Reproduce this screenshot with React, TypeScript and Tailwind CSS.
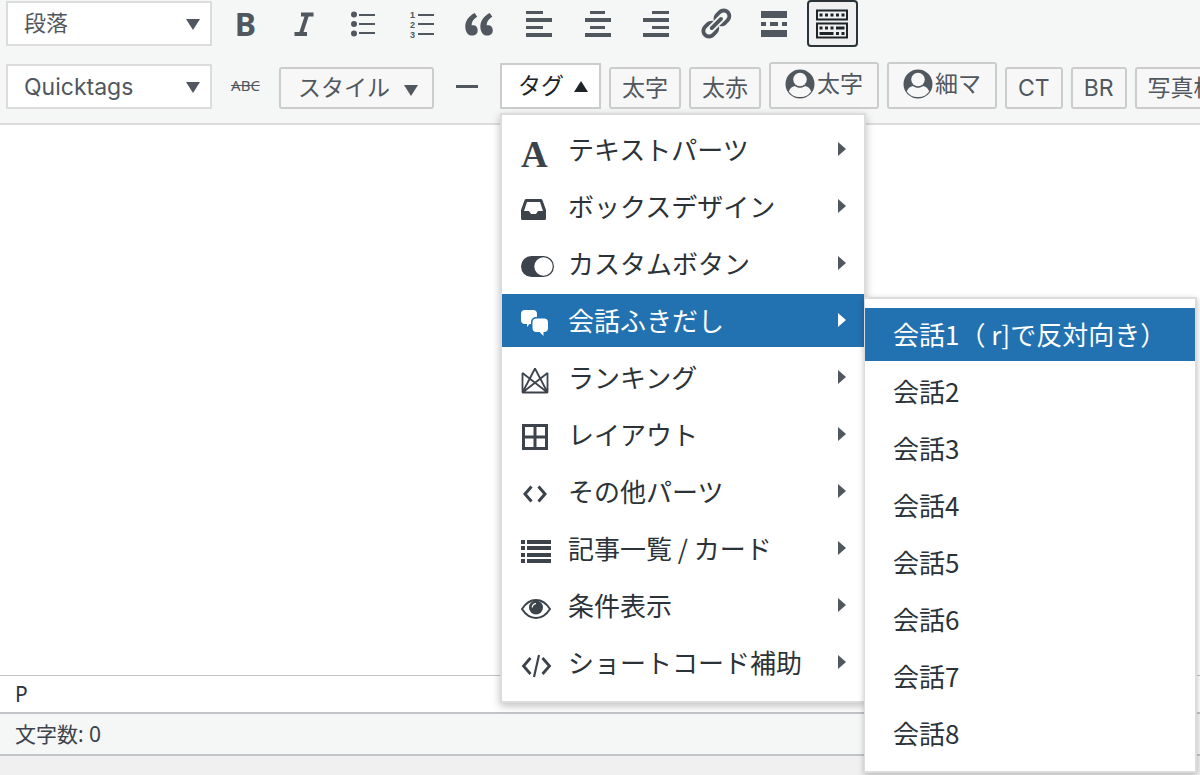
import { ReactNode } from "react";

const TALK_ITEMS = [
  "会話1（ r]で反対向き）",
  "会話2",
  "会話3",
  "会話4",
  "会話5",
  "会話6",
  "会話7",
  "会話8",
];

function Svg({ w, h, children }: { w: number; h: number; children: ReactNode }) {
  return (
    <svg width={w} height={h} viewBox={`0 0 ${w} ${h}`} fill="currentColor" aria-hidden="true" className="shrink-0 overflow-visible">
      {children}
    </svg>
  );
}

function CaretDown() {
  return (
    <Svg w={14} h={11}>
      <path d="M0 0h14L7 11z" />
    </Svg>
  );
}

function UserIcon() {
  return (
    <Svg w={30} h={30}>
      <circle cx="15" cy="15" r="14.5" />
      <circle cx="15" cy="10.5" r="6.8" fill="#f7f7f7" />
      <path d="M3.800 22.500c1-3.200 3.200-5 6-5.600 3.200 2.400 7.200 2.400 10.400 0 2.800.6 5 2.400 6 5.600A13 13 0 0 1 15 28 13 13 0 0 1 3.800 22.500z" fill="#f7f7f7" />
    </Svg>
  );
}

const TOOLS: { label: string; icon: ReactNode; active?: boolean }[] = [
  { label: "太字", icon: <span className="font-['Noto_Sans','Noto_Sans_CJK_JP',sans-serif] text-[32px] leading-8 font-bold">B</span> },
  {
    label: "イタリック",
    icon: (
      <Svg w={20} h={24}>
        <path d="M7 2.500h12.500M.5 22h12.500M13.200 2.500L6.800 22" fill="none" stroke="currentColor" strokeWidth="4" />
      </Svg>
    ),
  },
  {
    label: "番号なしリスト",
    icon: (
      <Svg w={24} h={26}>
        <circle cx="3" cy="3.5" r="3" />
        <circle cx="3" cy="13" r="3" />
        <circle cx="3" cy="22.5" r="3" />
        <path d="M8 3h16v2H8zM8 12h16v2H8zM8 21h16v2H8z" />
      </Svg>
    ),
  },
  {
    label: "番号付きリスト",
    icon: (
      <Svg w={26} h={32}>
        <g fontFamily="Liberation Sans, sans-serif" fontSize="9" fontWeight="700">
          <text x="1" y="10">1</text>
          <text x="1" y="20">2</text>
          <text x="1" y="30">3</text>
        </g>
        <path d="M9 6h16v2H9zM9 15h16v2H9zM9 25h16v2H9z" />
      </Svg>
    ),
  },
  {
    label: "引用",
    icon: (
      <svg width="32" height="32" viewBox="0 0 20 20" fill="currentColor" aria-hidden="true" className="mt-1">
        <path d="M8.54 12.74c0-.87-.24-1.61-.72-2.22-.73-.92-2.14-1.03-2.96-.85-.34-1.93 1.3-4.39 3.42-5.45L6.65 1.94C3.45 3.46.31 6.96.85 11.37 1.19 14.16 2.8 16 5.08 16c1 0 1.83-.29 2.48-.88.66-.59.98-1.38.98-2.38zm9.43 0c0-.87-.24-1.61-.72-2.22-.73-.92-2.14-1.03-2.96-.85-.34-1.93 1.3-4.39 3.42-5.45l-1.63-2.28c-3.2 1.52-6.34 5.02-5.8 9.43.34 2.79 1.95 4.63 4.23 4.63 1 0 1.83-.29 2.48-.88.66-.59.98-1.38.98-2.38z" />
      </svg>
    ),
  },
  {
    label: "左寄せ",
    icon: (
      <Svg w={26} h={26}>
        <path d="M0 0h17v3H0zM0 7h26v4H0zM0 15h17v3H0zM0 22h26v4H0z" />
      </Svg>
    ),
  },
  {
    label: "中央揃え",
    icon: (
      <Svg w={26} h={26}>
        <path d="M5 0h15v3H5zM0 7h26v4H0zM5 15h15v3H5zM0 22h26v4H0z" />
      </Svg>
    ),
  },
  {
    label: "右寄せ",
    icon: (
      <Svg w={26} h={26}>
        <path d="M9 0h17v3H9zM0 7h26v4H0zM9 15h17v3H9zM0 22h26v4H0z" />
      </Svg>
    ),
  },
  {
    label: "リンクの挿入",
    icon: (
      <svg width="35" height="35" viewBox="0 0 20 20" fill="currentColor" aria-hidden="true">
        <path d="M17.74 2.76c1.68 1.69 1.68 4.41 0 6.1l-1.53 1.52c-1.12 1.12-2.7 1.47-4.14 1.09l2.62-2.61.76-.77.76-.76c.84-.84.84-2.2 0-3.04-.84-.85-2.2-.85-3.04 0l-.77.76-3.38 3.38c-.37-1.44-.02-3.02 1.1-4.14l1.52-1.53c1.69-1.68 4.42-1.68 6.1 0zM8.59 13.43l5.34-5.34c.42-.42.42-1.1 0-1.52-.44-.43-1.13-.39-1.53 0l-5.33 5.34c-.42.42-.42 1.1 0 1.52.44.43 1.13.39 1.52 0zm-.76 2.29l4.14-4.15c.38 1.44.03 3.02-1.09 4.14l-1.52 1.53c-1.69 1.68-4.41 1.68-6.1 0-1.68-1.68-1.68-4.42 0-6.1l1.53-1.52c1.12-1.12 2.7-1.47 4.14-1.1l-4.14 4.15c-.85.84-.85 2.2 0 3.05.84.84 2.2.84 3.04 0z" />
      </svg>
    ),
  },
  {
    label: "「続きを読む」タグを挿入",
    icon: (
      <Svg w={26} h={26}>
        <path d="M0 0h26v7H0zM0 11h5v4H0zM9 11h8v4H9zM21 11h5v4h-5zM0 19h26v7H0z" />
      </Svg>
    ),
  },
  {
    label: "ツールバー切り替え",
    active: true,
    icon: (
      <Svg w={34} h={30}>
        <path d="M2 1.5h30v9H2zM2 14.5h30v14H2z" fill="none" stroke="currentColor" strokeWidth="2" />
        <path d="M4.500 4.500h3v3h-3zM10 4.500h3v3h-3zM15.500 4.500h3v3h-3zM21 4.500h3v3h-3zM26.500 4.500h3v3h-3zM4.500 17.500h3v3h-3zM10 17.500h3v3h-3zM15.500 17.500h3v3h-3zM21 17.500h8.500v3H21zM4.500 23h14v3h-14zM21 23h3v3h-3zM26.500 23h3v3h-3z" />
      </Svg>
    ),
  },
];

const MENU: { label: string; icon: ReactNode; open?: boolean }[] = [
  {
    label: "テキストパーツ",
    icon: <span className="pt-1 font-['Liberation_Serif',serif] text-[37px] leading-7 font-bold">A</span>,
  },
  {
    label: "ボックスデザイン",
    icon: (
      <Svg w={25} h={21}>
        <path fillRule="evenodd" d="M5.500 0h14a2 2 0 0 1 2 1.300L25 11v8.500a1.500 1.500 0 0 1-1.500 1.500h-22A1.500 1.500 0 0 1 0 19.500V11l3.500-9.700A2 2 0 0 1 5.500 0zM6 3L3 12h5l2 3h5l2-3h5L19 3z" />
      </Svg>
    ),
  },
  {
    label: "カスタムボタン",
    icon: (
      <Svg w={33} h={21}>
        <rect width="33" height="21" rx="10.5" />
        <circle cx="22.500" cy="10.500" r="9.200" fill="#fff" />
      </Svg>
    ),
  },
  {
    label: "会話ふきだし",
    open: true,
    icon: (
      <Svg w={28} h={27}>
        <path d="M4 0h8a4 4 0 0 1 4 4v3h-1a5 5 0 0 0-5 5v2H8.500L6 17v-3H4a4 4 0 0 1-4-4V4a4 4 0 0 1 4-4z" />
        <path d="M15.500 8.500H23a4 4 0 0 1 4 4V18a4 4 0 0 1-4 4h-.5v4l-4-4h-3a4 4 0 0 1-4-4v-5.500a4 4 0 0 1 4-4z" />
      </Svg>
    ),
  },
  {
    label: "ランキング",
    icon: (
      <Svg w={28} h={28}>
        <path d="M1.500 25.500V6l25 19.500L14 1.500l-12.500 24L26.500 6v19.500z" fill="none" stroke="currentColor" strokeWidth="1.800" strokeLinejoin="bevel" />
      </Svg>
    ),
  },
  {
    label: "レイアウト",
    icon: (
      <Svg w={28} h={28}>
        <path d="M2.500 1.500h23v23h-23zM14 1v24M2 13h24" fill="none" stroke="currentColor" strokeWidth="3" />
      </Svg>
    ),
  },
  {
    label: "その他パーツ",
    icon: (
      <Svg w={28} h={20}>
        <path d="M10.500 1.500L4 9l6.500 7.500M17.500 1.500L24 9l-6.500 7.500" fill="none" stroke="currentColor" strokeWidth="3" />
      </Svg>
    ),
  },
  {
    label: "記事一覧 / カード",
    icon: (
      <Svg w={30} h={24}>
        <path d="M0 0h4v4H0zM6 0h24v4H6zM0 6h4v4H0zM6 6h24v4H6zM0 13h4v4H0zM6 13h24v4H6zM0 19h4v4H0zM6 19h24v4H6z" />
      </Svg>
    ),
  },
  {
    label: "条件表示",
    icon: (
      <Svg w={30} h={20}>
        <path d="M1 10c3.500-5.500 8.200-9 14-9s10.500 3.500 14 9c-3.500 5.500-8.200 9-14 9S4.500 15.500 1 10z" fill="none" stroke="currentColor" strokeWidth="2" />
        <circle cx="15" cy="8.500" r="7" />
        <path d="M11.300 8.500A3.700 3.700 0 0 1 15 4.600" fill="none" stroke="#fff" strokeWidth="1.200" />
      </Svg>
    ),
  },
  {
    label: "ショートコード補助",
    icon: (
      <Svg w={31} h={22}>
        <path d="M9.500 3L2.500 11l7 8M21.500 3l7 8-7 8" fill="none" stroke="currentColor" strokeWidth="2.800" />
        <path d="M18 0L13 22" stroke="currentColor" strokeWidth="2.200" />
      </Svg>
    ),
  },
];

function FormatSelect({ label, value, textClass }: { label: string; value: string; textClass: string }) {
  return (
    <div className="relative w-[206px] shrink-0">
      <select
        aria-label={label}
        defaultValue={value}
        className={`block h-[45px] w-full appearance-none border-2 border-[#dcdcde] bg-white pl-4 text-[#50575e] ${textClass}`}
      >
        <option>{value}</option>
      </select>
      <span className="pointer-events-none absolute top-[18px] right-3 text-[#50575e]">
        <CaretDown />
      </span>
    </div>
  );
}

function TagButton({ children, tall }: { children: ReactNode; tall?: boolean }) {
  return (
    <button
      type="button"
      className={`flex shrink-0 items-center gap-0.5 rounded-[3px] border-2 border-[#cccccc] bg-[#f7f7f7] whitespace-nowrap ${
        tall ? "h-[47px] px-[14px] pb-1" : "h-[42px] px-[11px]"
      }`}
    >
      {children}
    </button>
  );
}

function TalkMenu() {
  return (
    <ul
      role="menu"
      className="absolute top-[3px] left-full flex w-[333px] flex-col gap-1 border-2 border-l border-[#dcdcde] bg-white pt-[9px] pb-[11px] text-[#2c3338] shadow-[0_2px_6px_rgba(0,0,0,0.25)]"
    >
      {TALK_ITEMS.map((item, i) => (
        <li key={item} role="none">
          <button
            type="button"
            role="menuitem"
            className={`block h-[53px] w-full pb-0.5 pl-7 text-left text-[26px] leading-[51px] whitespace-nowrap ${
              i === 0 ? "bg-[#2271b1] text-white" : ""
            }`}
          >
            {item}
          </button>
        </li>
      ))}
    </ul>
  );
}

function TagMenu() {
  return (
    <ul
      role="menu"
      className="absolute top-full left-0 z-10 mt-1 flex w-[366px] flex-col gap-1 border-2 border-[#dcdcde] bg-white pt-2 pb-3 font-['Noto_Sans_CJK_JP',sans-serif] text-[#2c3338] shadow-[0_3px_8px_rgba(0,0,0,0.25)]"
    >
      {MENU.map((item) => (
        <li key={item.label} role="none" className="relative">
          <button
            type="button"
            role="menuitem"
            aria-haspopup="true"
            className={`flex h-[53px] w-full items-center pr-[18px] pb-0.5 pl-[19px] ${item.open ? "bg-[#2271b1] text-white" : ""}`}
          >
            <span className={`flex w-[47px] pt-2 ${item.open ? "text-white" : "text-[#3c434a]"}`}>{item.icon}</span>
            <span className="flex-1 text-left text-[26px] leading-[51px] whitespace-nowrap">{item.label}</span>
            <span className={item.open ? "text-white" : "text-[#50575e]"}>
              <Svg w={8} h={14}>
                <path d="M0 0l8 7-8 7z" />
              </Svg>
            </span>
          </button>
          {item.open && <TalkMenu />}
        </li>
      ))}
    </ul>
  );
}

export default function App() {
  return (
    <div className="flex h-screen flex-col overflow-hidden bg-[#f0f0f0] font-[Inter,'Noto_Sans_CJK_JP',sans-serif] text-[#50575e]">
      <div className="flex flex-col gap-[15px] border-b-2 border-[#dcdcde] bg-[#f5f7f7] pb-[14px] pl-[6px]">
        <div className="flex h-[47px] items-center gap-2">
          <FormatSelect label="段落書式" value="段落" textClass="text-[22px]" />
          <div className="flex w-[638px] shrink-0 justify-between">
            {TOOLS.map((tool) => (
              <button
                key={tool.label}
                type="button"
                aria-label={tool.label}
                className={`flex h-[47px] w-[51px] items-center justify-center rounded ${
                  tool.active ? "border-2 border-[#2c3338] bg-[#f0f0f1] text-[#1d2327]" : ""
                }`}
              >
                {tool.icon}
              </button>
            ))}
          </div>
        </div>

        <div className="flex items-end gap-2 text-[23px] leading-8">
          <FormatSelect label="クイックタグ" value="Quicktags" textClass="text-[23px]" />
          <button
            type="button"
            aria-label="打ち消し"
            className="h-[45px] w-[51px] shrink-0 pb-1 font-['Noto_Sans',sans-serif] text-[15px] line-through"
          >
            ABC
          </button>
          <button
            type="button"
            className="flex h-[42px] w-[155px] shrink-0 items-center justify-between rounded-[3px] border-2 border-[#cccccc] bg-[#f7f7f7] pr-[14px] pl-[17px]"
          >
            スタイル
            <span className="pt-1">
              <CaretDown />
            </span>
          </button>
          <button type="button" aria-label="水平線" className="flex h-[45px] w-[50px] shrink-0 items-center justify-center">
            <Svg w={22} h={3}>
              <path d="M0 0h22v3H0z" />
            </Svg>
          </button>
          <div className="relative shrink-0">
            <button
              type="button"
              aria-expanded="true"
              className="flex h-[46px] w-[101px] items-center justify-between border-2 border-[#cccccc] bg-white pr-[11px] pl-4 text-[#1d2327]"
            >
              タグ
              <Svg w={14} h={11}>
                <path d="M0 11h14L7 0z" />
              </Svg>
            </button>
            <TagMenu />
          </div>
          <TagButton>太字</TagButton>
          <TagButton>太赤</TagButton>
          <TagButton tall>
            <UserIcon />
            太字
          </TagButton>
          <TagButton tall>
            <UserIcon />
            細マ
          </TagButton>
          <TagButton>CT</TagButton>
          <TagButton>BR</TagButton>
          <TagButton>写真枠</TagButton>
        </div>
      </div>

      <div className="flex-1 bg-white" />

      <div className="border-t border-b-2 border-t-[#c3c4c7] border-b-[#c3c4c7] bg-white px-[15px] font-['Noto_Sans','Noto_Sans_CJK_JP',sans-serif] text-[21px] leading-9 text-[#2c3338]">
        P
      </div>
      <div className="mb-[19px] border-b-2 border-[#c3c4c7] bg-[#f5f7f7] px-[15px] font-['Noto_Sans','Noto_Sans_CJK_JP',sans-serif] text-[21px] leading-10 text-[#3c434a]">
        文字数: 0
      </div>
    </div>
  );
}
